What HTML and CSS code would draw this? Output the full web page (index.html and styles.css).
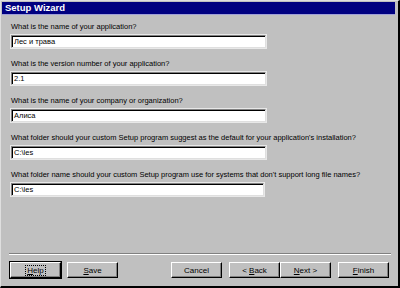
FILE: index.html
```html
<!DOCTYPE html>
<html lang="en">
<head>
  <meta charset="UTF-8">
  <title>Setup Wizard</title>
  <link rel="stylesheet" href="styles.css">
</head>
<body>
  <div class="window">
    <div class="titlebar">Setup Wizard</div>
    <div class="content">
      <div class="field">
        <label>What is the name of your application?</label>
        <div class="input">Лес и трава</div>
      </div>
      <div class="field">
        <label>What is the version number of your application?</label>
        <div class="input">2.1</div>
      </div>
      <div class="field">
        <label>What is the name of your company or organization?</label>
        <div class="input">Алиса</div>
      </div>
      <div class="field">
        <label>What folder should your custom Setup program suggest as the default for your application's installation?</label>
        <div class="input">C:\les</div>
      </div>
      <div class="field">
        <label>What folder name should your custom Setup program use for systems that don't support long file names?</label>
        <div class="input short">C:\les</div>
      </div>
    </div>
    <div class="separator"></div>
    <div class="buttons">
      <div class="group">
        <button class="btn default"><span class="focus"><u>H</u>elp</span></button>
        <button class="btn"><u>S</u>ave</button>
      </div>
      <div class="group">
        <button class="btn">Cancel</button>
        <div class="pair">
          <button class="btn">&lt; <u>B</u>ack</button>
          <button class="btn"><u>N</u>ext &gt;</button>
        </div>
        <button class="btn"><u>F</u>inish</button>
      </div>
    </div>
  </div>
</body>
</html>
```

FILE: styles.css
```css
* {
  margin: 0;
  padding: 0;
  box-sizing: border-box;
}

body {
  width: 400px;
  height: 288px;
  background-color: #c0c0c0;
  font-family: "Liberation Sans", Arial, sans-serif;
  font-size: 7.5px;
  color: #000;
  overflow: hidden;
}

.window {
  width: 400px;
  height: 288px;
  border-top: 1px solid #dfdfdf;
  border-left: 1px solid #dfdfdf;
  border-right: 2px solid #000;
  border-bottom: 2px solid #000;
  padding: 1px;
  display: flex;
  flex-direction: column;
}

.titlebar {
  height: 13px;
  background-color: #000080;
  border-bottom: 1px solid #a0a0d8;
  color: #fff;
  font-weight: bold;
  font-size: 9.5px;
  line-height: 12px;
  padding-left: 3px;
  margin-right: 2px;
}

.content {
  padding: 6px 0 0 8px;
  display: flex;
  flex-direction: column;
  gap: 10px;
}

.field label {
  display: block;
  height: 12px;
  line-height: 12px;
  margin-bottom: 2px;
  padding-left: 1px;
}

.input {
  width: 255px;
  height: 13px;
  margin-left: 1px;
  background-color: #fff;
  border-top: 1px solid #808080;
  border-left: 1px solid #808080;
  border-right: 1px solid #dfdfdf;
  border-bottom: 1px solid #dfdfdf;
  box-shadow: inset 1px 1px 0 #000, 0 0 0 1px #e8e8e8;
  padding-left: 2px;
  line-height: 11px;
  font-size: 7.5px;
}

.input.short {
  width: 253px;
}

.separator {
  margin: auto 6px 0 7px;
  height: 2px;
  border-top: 1px solid #808080;
  border-bottom: 1px solid #fff;
}

.buttons {
  display: flex;
  justify-content: space-between;
  padding: 7px 8px 7px 8px;
}

.group {
  display: flex;
  gap: 7px;
}

.group:first-child {
  gap: 6px;
}

.pair {
  display: flex;
}

.btn {
  width: 51px;
  height: 16px;
  background-color: #c0c0c0;
  border-top: 1px solid #fff;
  border-left: 1px solid #fff;
  border-right: 1px solid #000;
  border-bottom: 1px solid #000;
  box-shadow: inset -1px -1px 0 #808080;
  font-family: "Liberation Sans", Arial, sans-serif;
  font-size: 8px;
  color: #000;
}

.btn.default {
  outline: 1px solid #000;
}

.focus {
  border: 1px dotted #000;
  padding: 0 1px;
}
```
